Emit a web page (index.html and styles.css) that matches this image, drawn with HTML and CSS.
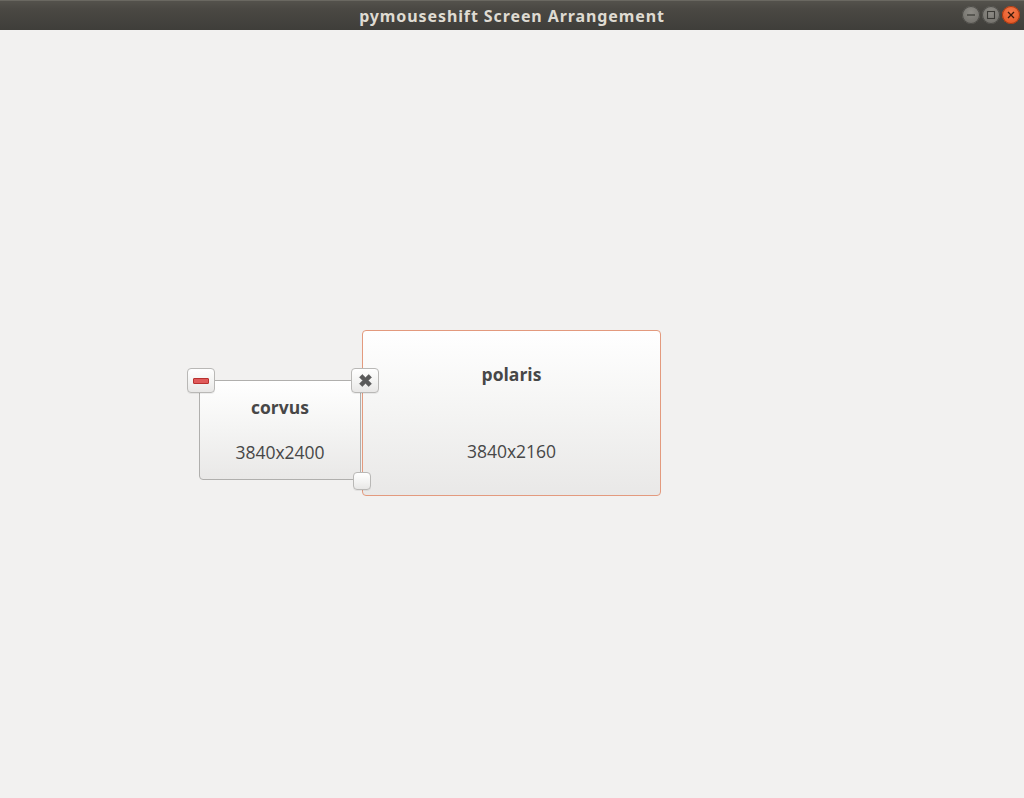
FILE: index.html
```html
<!DOCTYPE html>
<html>
<head>
<meta charset="utf-8">
<link rel="stylesheet" href="styles.css">
</head>
<body>
<div class="window">
  <header class="titlebar">
    <div class="title">pymouseshift Screen Arrangement</div>
    <div class="controls">
      <span class="ctl ctl-min"><svg width="18" height="18" viewBox="0 0 18 18"><line x1="5" y1="9" x2="13" y2="9" stroke="#3a3935" stroke-width="1.2"/></svg></span>
      <span class="ctl ctl-max"><svg width="18" height="18" viewBox="0 0 18 18"><rect x="5.5" y="5.5" width="7" height="7" fill="none" stroke="#3a3935" stroke-width="1.1"/></svg></span>
      <span class="ctl ctl-close"><svg width="18" height="18" viewBox="0 0 18 18"><path d="M6 6 L12 12 M12 6 L6 12" stroke="#3a1a0a" stroke-width="1.3"/></svg></span>
    </div>
  </header>
  <main class="canvas">
    <div class="screen screen-corvus">
      <div class="name">corvus</div>
      <div class="res">3840x2400</div>
    </div>
    <div class="screen screen-polaris">
      <div class="name">polaris</div>
      <div class="res">3840x2160</div>
    </div>
    <button class="tool tool-disable" title="disable">
      <span class="redbar"></span>
    </button>
    <button class="tool tool-remove" title="remove">
      <svg width="15" height="15" viewBox="0 0 15 15"><path d="M1.5 4.3 L4.3 1.5 L7.5 4.7 L10.7 1.5 L13.5 4.3 L10.3 7.5 L13.5 10.7 L10.7 13.5 L7.5 10.3 L4.3 13.5 L1.5 10.7 L4.7 7.5 Z" fill="#5a5a5a" stroke="#5a5a5a" stroke-width="0.6" stroke-linejoin="round"/></svg>
    </button>
    <button class="tool tool-handle" title="resize"></button>
  </main>
</div>
</body>
</html>
```
FILE: styles.css
```css
html, body {
  margin: 0;
  padding: 0;
  height: 100%;
}
body {
  font-family: "Open Sans", "Noto Sans", "DejaVu Sans", sans-serif;
  background: #f2f1f0;
}
.window {
  display: flex;
  flex-direction: column;
  height: 798px;
  width: 1024px;
}
.titlebar {
  height: 30px;
  flex: none;
  background: linear-gradient(#55534d, #4a4843 30%, #3f3e3a);
  position: relative;
  display: flex;
  align-items: center;
  justify-content: center;
  box-shadow: inset 0 1px 0 #6a6861;
}
.title {
  color: #dfdbd2;
  font-family: "Noto Sans", "Open Sans", sans-serif;
  font-weight: 700;
  font-size: 16px;
  letter-spacing: 0.9px;
  padding-top: 1px;
}
.controls {
  position: absolute;
  right: 4px;
  top: 6px;
  display: flex;
  gap: 2px;
}
.ctl {
  width: 18px;
  height: 18px;
  border-radius: 50%;
  display: block;
}
.ctl svg { display: block; }
.ctl-min, .ctl-max {
  background: radial-gradient(circle at 50% 35%, #8e8c86, #6b6964);
  box-shadow: inset 0 0 0 1px #4c4b47;
}
.ctl-close {
  background: radial-gradient(circle at 50% 35%, #f47a4c, #e2501c);
  box-shadow: inset 0 0 0 1px #a53a14;
}
.canvas {
  flex: 1;
  position: relative;
  background: #f2f1f0;
}
.screen {
  position: absolute;
  box-sizing: border-box;
  background: linear-gradient(#ffffff, #f4f4f3 50%, #e9e8e7);
  color: #474747;
  text-align: center;
}
.name {
  font-weight: 700;
  font-size: 17.5px;
}
.res {
  font-size: 17.5px;
}
.screen-corvus {
  left: 199px;
  top: 350px;
  width: 162px;
  height: 100px;
  border: 1px solid #b0afad;
  border-radius: 4px;
  padding-top: 14px;
}
.screen-corvus .res { margin-top: 21px; }
.screen-polaris {
  left: 362px;
  top: 300px;
  width: 299px;
  height: 166px;
  border: 1px solid #e39a7e;
  border-radius: 4px;
  padding-top: 31px;
}
.screen-polaris .res { margin-top: 53px; }
.tool {
  position: absolute;
  box-sizing: border-box;
  margin: 0;
  padding: 0;
  border: 1px solid #b9b8b6;
  border-radius: 4px;
  background: linear-gradient(#ffffff, #f2f2f1 60%, #e8e7e6);
  box-shadow: 0 1px 0 rgba(0,0,0,0.06);
  display: flex;
  align-items: center;
  justify-content: center;
}
.tool-disable {
  left: 187px;
  top: 338px;
  width: 28px;
  height: 25px;
}
.redbar {
  display: block;
  width: 16px;
  height: 6px;
  box-sizing: border-box;
  background: #e05a5a;
  border: 1px solid #b8312f;
  border-radius: 1px;
}
.tool-remove {
  left: 351px;
  top: 338px;
  width: 28px;
  height: 25px;
}
.tool-handle {
  left: 353px;
  top: 442px;
  width: 18px;
  height: 18px;
  border-radius: 4px;
}
```
